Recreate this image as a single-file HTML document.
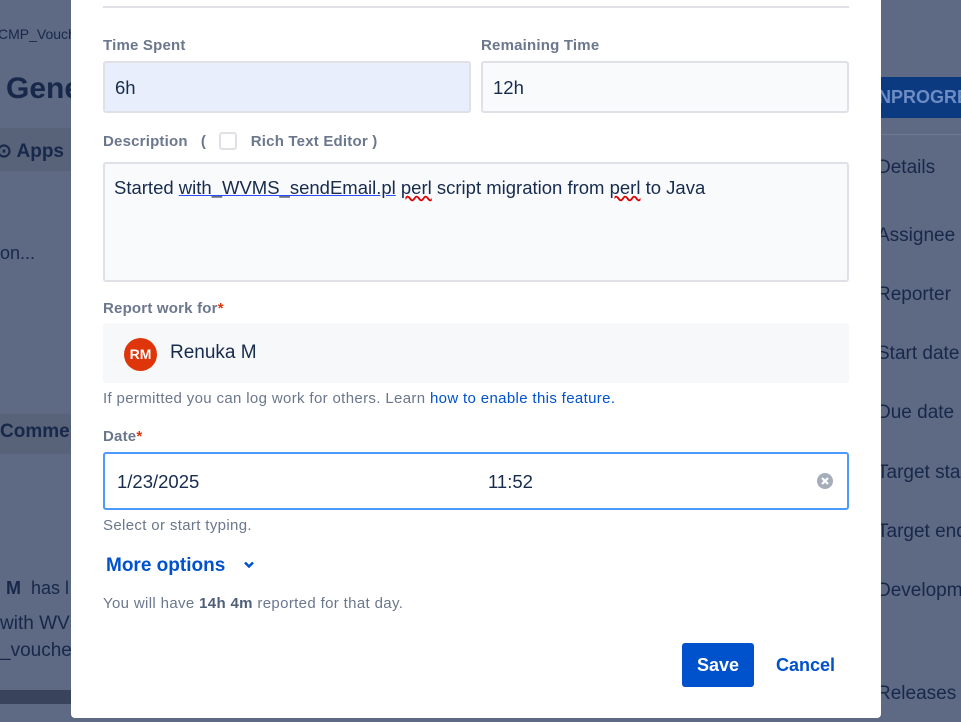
<!DOCTYPE html>
<html><head><meta charset="utf-8"><style>
*{box-sizing:border-box;margin:0;padding:0}
body{width:961px;height:722px;overflow:hidden;background:#5e6983;font-family:"Liberation Sans",sans-serif;position:relative;color:#172b4d}
.bg{position:absolute;color:#17284a;white-space:nowrap}
.modal{position:absolute;left:71px;top:0;width:810px;height:718px;background:#fff;border-radius:0 0 4px 4px}
.lbl{position:absolute;font-size:15px;font-weight:bold;color:#6b778c;letter-spacing:0.2px}
.inp{position:absolute;background:#f9fafc;border:2px solid #dfe1e6;border-radius:3px;font-size:18.5px;color:#172b4d}
.req{color:#de350b}
.help{position:absolute;font-size:15px;color:#6b778c;letter-spacing:0.35px;white-space:nowrap}
</style></head><body>
<div class="bg" style="left:-2px;top:26px;font-size:14px">CMP_Vouch</div>
<div class="bg" style="left:6px;top:72px;font-size:30px;font-weight:bold">Gene</div>
<div style="position:absolute;left:0;top:128px;width:71px;height:43px;background:#586279"></div>
<div class="bg" style="left:-4px;top:140px;font-size:19px;font-weight:bold">⊙ Apps</div>
<div class="bg" style="left:0;top:243px;font-size:18px">on...</div>
<div style="position:absolute;left:0;top:414px;width:71px;height:40px;background:#586279"></div>
<div class="bg" style="left:0;top:421px;font-size:19px;font-weight:bold">Commen</div>
<div class="bg" style="left:6px;top:578px;font-size:18px"><b>M</b>&nbsp; has l</div>
<div class="bg" style="left:0;top:613px;font-size:19px">with WVS</div>
<div class="bg" style="left:0;top:640px;font-size:19px">_vouchere</div>
<div style="position:absolute;left:0;top:690px;width:71px;height:14px;background:#39445c"></div>
<div style="position:absolute;left:872px;top:77px;width:89px;height:41px;background:#0c3a80"></div>
<div class="bg" style="left:878px;top:87px;font-size:18px;font-weight:bold;color:#6d8cc4">NPROGRE</div>
<div style="position:absolute;left:872px;top:134px;width:89px;height:1px;background:#6f7990"></div>
<div class="bg" style="left:877px;top:157px;font-size:19px">Details</div>
<div class="bg" style="left:877px;top:225px;font-size:19px">Assignee</div>
<div class="bg" style="left:877px;top:284px;font-size:19px">Reporter</div>
<div class="bg" style="left:877px;top:343px;font-size:19px">Start date</div>
<div class="bg" style="left:877px;top:402px;font-size:19px">Due date</div>
<div class="bg" style="left:877px;top:462px;font-size:19px">Target star</div>
<div class="bg" style="left:877px;top:521px;font-size:19px">Target end</div>
<div class="bg" style="left:877px;top:580px;font-size:19px">Developm</div>
<div class="bg" style="left:877px;top:683px;font-size:19px">Releases</div>

<div class="modal">
<div style="position:absolute;left:32px;top:6px;width:746px;height:2px;background:#dfe1e6"></div>
<div class="lbl" style="left:32px;top:37px">Time Spent</div>
<div class="inp" style="left:32px;top:61px;width:368px;height:52px;background:#e8eefc;padding:14px 10px">6h</div>
<div class="lbl" style="left:410px;top:37px">Remaining Time</div>
<div class="inp" style="left:410px;top:61px;width:368px;height:52px;padding:14px 10px">12h</div>
<div class="lbl" style="left:32px;top:132px">Description &nbsp;&nbsp;( <span style="display:inline-block;width:18px;height:18px;border:2px solid #dfe1e6;border-radius:3px;vertical-align:-4px;margin:0 9px"></span> Rich Text Editor )</div>
<div class="inp" style="left:32px;top:162px;width:746px;height:120px;padding:13px 9px">Started <span style="text-decoration:underline;text-decoration-color:#2f4bff">with_WVMS_sendEmail.pl</span> <span style="text-decoration:underline wavy #d00">perl</span> script migration from <span style="text-decoration:underline wavy #d00">perl</span> to Java</div>
<div class="lbl" style="left:32px;top:300px">Report work for<span class="req">*</span></div>
<div style="position:absolute;left:32px;top:323px;width:746px;height:60px;background:#f7f8fa;border-radius:3px"></div>
<div style="position:absolute;left:53px;top:338px;width:33px;height:33px;border-radius:50%;background:#de350b;color:#fff;font-size:14px;font-weight:bold;text-align:center;line-height:33px">RM</div>
<div style="position:absolute;left:99px;top:342px;font-size:19px;color:#172b4d">Renuka M</div>
<div class="help" style="left:32px;top:390px">If permitted you can log work for others. Learn <span style="color:#0052cc">how to enable this feature.</span></div>
<div class="lbl" style="left:32px;top:428px">Date<span class="req">*</span></div>
<div class="inp" style="left:32px;top:452px;width:746px;height:58px;background:#fff;border-color:#4c9aff;padding:17px 12px">1/23/2025<span style="position:absolute;left:383px">11:52</span>
<svg style="position:absolute;right:14px;top:19px" width="16" height="16" viewBox="0 0 16 16"><circle cx="8" cy="8" r="8" fill="#a5adba"/><path d="M5 5L11 11M11 5L5 11" stroke="#fff" stroke-width="2.2"/></svg></div>
<div class="help" style="left:32px;top:517px">Select or start typing.</div>
<div style="position:absolute;left:35px;top:555px;font-size:19px;font-weight:bold;color:#0052cc">More options
<svg style="margin-left:12px;vertical-align:2px" width="12" height="8" viewBox="0 0 12 8"><path d="M2 1.5L6 5.5L10 1.5" stroke="#0052cc" stroke-width="2.5" fill="none"/></svg></div>
<div class="help" style="left:32px;top:595px">You will have <b style="color:#505f79">14h 4m</b> reported for that day.</div>
<div style="position:absolute;left:611px;top:643px;width:72px;height:44px;background:#0052cc;border-radius:3px;color:#fff;font-size:18px;font-weight:bold;text-align:center;line-height:44px">Save</div>
<div style="position:absolute;left:705px;top:643px;font-size:18px;font-weight:bold;color:#0052cc;line-height:44px">Cancel</div>
</div>
</body></html>
